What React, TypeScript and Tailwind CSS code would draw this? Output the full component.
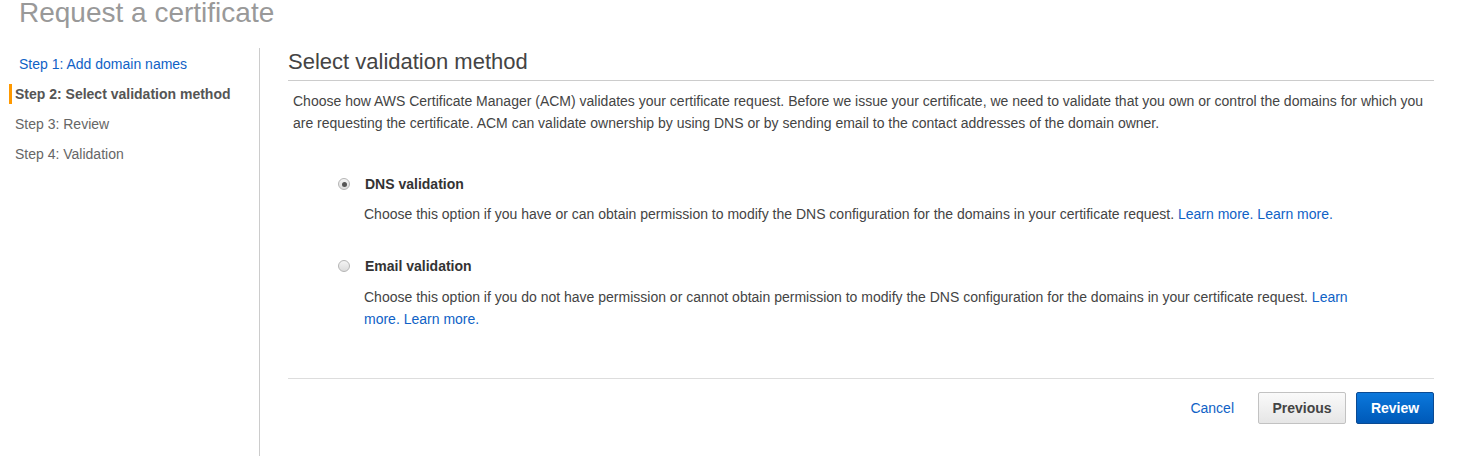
import React from "react"

const steps = [
  { label: "Step 1: Add domain names", state: "link" },
  { label: "Step 2: Select validation method", state: "active" },
  { label: "Step 3: Review", state: "idle" },
  { label: "Step 4: Validation", state: "idle" },
]

function Radio({ checked }: { checked?: boolean }) {
  return (
    <span className="flex h-[12px] w-[12px] items-center justify-center rounded-full border border-[#b5b5b5] bg-gradient-to-b from-[#f4f4f4] to-[#dcdcdc]">
      {checked && <span className="h-[5px] w-[5px] rounded-full bg-[#555]" />}
    </span>
  )
}

function Option({
  label,
  checked,
  children,
  descGap = "mt-[8px]",
}: {
  label: string
  checked?: boolean
  children: React.ReactNode
  descGap?: string
}) {
  return (
    <div className="flex">
      <div className="flex h-[22px] w-[77px] items-center justify-end pr-[15px]">
        <Radio checked={checked} />
      </div>
      <div>
        <div className="h-[22px] leading-[22px] font-bold text-[#333]">{label}</div>
        <p className={`${descGap} -ml-[1px] w-[1000px] leading-[22px] text-[#444]`}>{children}</p>
      </div>
    </div>
  )
}

export default function App() {
  return (
    <div className="h-[456px] overflow-hidden bg-white font-['Liberation_Sans',Arial,sans-serif] text-[14px]">
      <h1 className="-mt-[4px] h-[52px] pl-[19px] text-[28px] leading-[34px] text-[#999]">
        Request a certificate
      </h1>

      <div className="flex">
        <nav className="h-[420px] w-[260px] shrink-0 border-r border-[#ccc] pt-[1px]">
          {steps.map((s) => (
            <div key={s.label} className="flex h-[30px] items-center">
              {s.state === "active" ? (
                <>
                  <span className="ml-[9px] mr-[3px] h-[20px] w-[3px] bg-[#f90]" />
                  <span className="font-bold text-[#555]">{s.label}</span>
                </>
              ) : s.state === "link" ? (
                <a className="pl-[19px] text-[#0f62c6]" href="#">
                  {s.label}
                </a>
              ) : (
                <span className="pl-[15px] text-[#666]">{s.label}</span>
              )}
            </div>
          ))}
        </nav>

        <main className="ml-[28px] w-[1146px]">
          <h2 className="h-[33px] border-b border-[#ccc] text-[22px] leading-[28px] text-[#444]">
            Select validation method
          </h2>
          <p className="mt-[9px] px-[5px] leading-[22px] text-[#444]">
            Choose how AWS Certificate Manager (ACM) validates your certificate request. Before we issue your
            certificate, we need to validate that you own or control the domains for which you are requesting the
            certificate. ACM can validate ownership by using DNS or by sending email to the contact addresses of the
            domain owner.
          </p>

          <div className="mt-[39px] flex flex-col gap-[30px]">
            <Option label="DNS validation" checked>
              Choose this option if you have or can obtain permission to modify the DNS configuration for the domains
              in your certificate request.{" "}
              <a className="text-[#0f62c6]" href="#">Learn more.</a>{" "}
              <a className="text-[#0f62c6]" href="#">Learn more.</a>
            </Option>
            <Option label="Email validation" descGap="mt-[9px]">
              Choose this option if you do not have permission or cannot obtain permission to modify the DNS
              configuration for the domains in your certificate request.{" "}
              <a className="text-[#0f62c6]" href="#">Learn more.</a>{" "}
              <a className="text-[#0f62c6]" href="#">Learn more.</a>
            </Option>
          </div>

          <div className="mt-[48px] border-t border-[#ddd]" />

          <div className="mt-[13px] flex items-center justify-end">
            <a className="mr-[24px] text-[#0f62c6]" href="#">Cancel</a>
            <button className="h-[32px] w-[88px] rounded-[2px] border border-[#c2c2c2] bg-gradient-to-b from-[#fafafa] to-[#e6e6e6] font-bold text-[#444]">
              Previous
            </button>
            <button className="ml-[10px] h-[32px] w-[78px] rounded-[2px] border border-[#0a4a93] bg-gradient-to-b from-[#0c78dc] to-[#0059b8] font-bold text-white">
              Review
            </button>
          </div>
        </main>
      </div>
    </div>
  )
}
